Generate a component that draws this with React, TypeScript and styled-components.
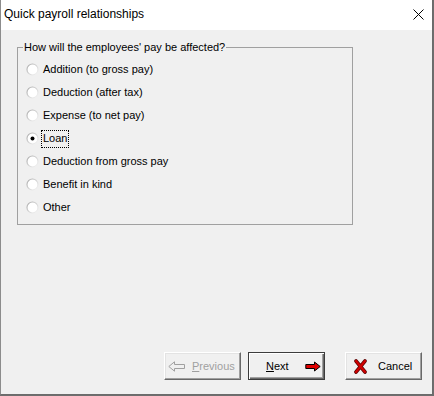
import { useState } from 'react'
import styled, { createGlobalStyle, css } from 'styled-components'

const GlobalStyle = createGlobalStyle`
  html, body {
    margin: 0;
    padding: 0;
    background: #6e6e6e;
  }
  body {
    font-family: "Liberation Sans", Arial, sans-serif;
    font-size: 11px;
    color: #000;
  }
`

const Window = styled.div`
  width: 431px;
  height: 394px;
  border-left: 1px solid #8c8c8c;
  border-right: 1px solid #6b6b6b;
  border-bottom: 1px solid #6b6b6b;
  display: flex;
  flex-direction: column;
  background: #f0f0f0;
`

const TitleBar = styled.div`
  height: 30px;
  background: #fff;
  display: flex;
  align-items: center;
  justify-content: space-between;
  padding: 0 0 0 3px;
  flex-shrink: 0;
`

const Title = styled.span`
  font-size: 12px;
  margin-top: -2px;
`

const CloseButton = styled.div`
  width: 28px;
  height: 30px;
  display: flex;
  align-items: center;
  justify-content: center;
  margin-top: -2px;
`

const Body = styled.div`
  flex: 1;
  display: flex;
  flex-direction: column;
`

const Group = styled.div`
  margin: 17px 0 0 16px;
  width: 334px;
  height: 176px;
  border: 1px solid #a0a0a0;
  display: flex;
  flex-direction: column;
`

const Legend = styled.span`
  align-self: flex-start;
  margin: -8px 0 0 5px;
  padding: 0 1px;
  line-height: 14px;
  height: 14px;
  background: #f0f0f0;
`

const OptionList = styled.div`
  padding: 4px 0 0 8px;
  display: flex;
  flex-direction: column;
`

const Option = styled.label`
  height: 23px;
  display: flex;
  align-items: center;
  gap: 3px;
  cursor: default;
`

const OptionText = styled.span<{ focused: boolean }>`
  padding: 1px 1px 2px 1px;
  line-height: 13px;
  outline: 1px dotted transparent;
  ${props => props.focused && css`
    outline: 1px dotted #000;
  `}
`

const Footer = styled.div`
  margin-top: auto;
  display: flex;
  justify-content: flex-end;
  align-items: center;
  padding: 0 10px 14px 0;
`

const Button = styled.button<{ isDefault?: boolean }>`
  width: 77px;
  height: 28px;
  box-sizing: border-box;
  font-family: "Liberation Sans", Arial, sans-serif;
  font-size: 11px;
  color: #000;
  background: #f0f0f0;
  border: 1px solid;
  border-color: #fff #696969 #696969 #fff;
  box-shadow: inset -1px -1px #a0a0a0, inset 1px 1px #e3e3e3;
  display: flex;
  align-items: center;
  padding: 0;
  ${props => props.isDefault && css`
    border-color: #3c3c3c;
    box-shadow: inset 1px 1px #fff, inset -1px -1px #696969, inset -2px -2px #a0a0a0;
  `}
  &:disabled {
    color: #a0a0a0;
  }
`

const PrevButton = styled(Button)`
  padding-left: 3px;
  gap: 6px;
  margin-right: 7px;
`

const NextButton = styled(Button)`
  padding: 0 3px 0 17px;
  justify-content: space-between;
  margin-right: 20px;
`

const CancelButton = styled(Button)`
  padding-left: 8px;
  gap: 11px;
`

const Mnemonic = styled.span`
  text-decoration: underline;
  text-underline-offset: 1px;
`

const options = [
  'Addition (to gross pay)',
  'Deduction (after tax)',
  'Expense (to net pay)',
  'Loan',
  'Deduction from gross pay',
  'Benefit in kind',
  'Other',
]

const RadioIcon = ({ checked }: { checked: boolean }) => (
  <svg width="13" height="13" viewBox="0 0 13 13">
    <defs>
      <linearGradient id="rim" x1="0" y1="0" x2="1" y2="1">
        <stop offset="0" stopColor="#a8a8a8" />
        <stop offset="0.5" stopColor="#d4d4d4" />
        <stop offset="1" stopColor="#f6f6f6" />
      </linearGradient>
    </defs>
    <circle cx="6.5" cy="6.5" r="5.5" fill="#fff" stroke="url(#rim)" strokeWidth="1.2" />
    {checked && <circle cx="6.5" cy="6.5" r="2" fill="#000" />}
  </svg>
)

const App = () => {
  const [selected, setSelected] = useState('Loan')

  return (
    <>
      <GlobalStyle />
      <Window>
        <TitleBar>
          <Title>Quick payroll relationships</Title>
          <CloseButton>
            <svg width="11" height="11" viewBox="0 0 11 11">
              <path d="M0.5 0.5 L10.5 10.5 M10.5 0.5 L0.5 10.5" stroke="#000" strokeWidth="1" />
            </svg>
          </CloseButton>
        </TitleBar>
        <Body>
          <Group>
            <Legend>How will the employees' pay be affected?</Legend>
            <OptionList>
              {options.map(opt => (
                <Option key={opt} onClick={() => setSelected(opt)}>
                  <RadioIcon checked={selected === opt} />
                  <OptionText focused={selected === opt}>{opt}</OptionText>
                </Option>
              ))}
            </OptionList>
          </Group>
          <Footer>
            <PrevButton disabled>
              <svg width="18" height="11" viewBox="0 0 18 11">
                <path d="M0.8 5.5 L6.5 0.8 L6.5 3.5 L16.5 3.5 L16.5 7.5 L6.5 7.5 L6.5 10.2 Z" fill="none" stroke="#a0a0a0" strokeWidth="1" />
              </svg>
              <span><Mnemonic>P</Mnemonic>revious</span>
            </PrevButton>
            <NextButton isDefault>
              <span><Mnemonic>N</Mnemonic>ext</span>
              <svg width="16" height="11" viewBox="0 0 16 11">
                <path d="M15.2 5.5 L9.5 1 L9.5 3.5 L0.8 3.5 L0.8 7.5 L9.5 7.5 L9.5 10 Z" fill="#e00000" stroke="#000" strokeWidth="1" />
              </svg>
            </NextButton>
            <CancelButton>
              <svg width="13" height="15" viewBox="0 0 13 15">
                <path d="M2 2 L11 13 M11 2 L2 13" stroke="#5a0000" strokeWidth="3.6" strokeLinecap="round" />
                <path d="M2 2 L11 13 M11 2 L2 13" stroke="#d00000" strokeWidth="2.2" strokeLinecap="round" />
              </svg>
              <span>Cancel</span>
            </CancelButton>
          </Footer>
        </Body>
      </Window>
    </>
  )
}

export default App
